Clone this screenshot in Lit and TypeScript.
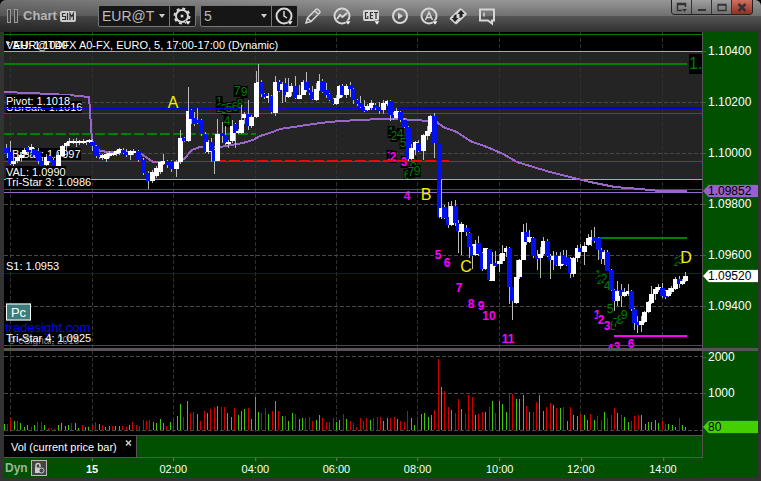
import { LitElement, html, css, svg } from "lit";
import { customElement, state } from "lit/decorators.js";

// Plot extents in chart units.
const LEFT = 4;
const WIDTH = 698;
const PRICE = { top: 32, height: 316 };
const VOLUME = { top: 351, height: 84 };

// centre, body top, body bottom, high, low, 1 = rising
const CANDLES = `6,148,153,144,153,0 10,152,164,141,165,0 13,161,164,155,166,1 17,157,161,152,163,1
21,155,158,152,162,1 24,150,154,148,158,1 28,147,152,146,157,0 31,147,150,144,153,1 34,149,155,148,157,0
38,151,161,148,164,0 42,161,166,158,167,0 46,157,165,154,166,1 49,156,161,155,163,0 53,160,166,158,167,0
58,155,167,152,168,1 62,146,156,145,157,1 66,143,146,142,152,1 69,141,143,138,146,1 73,141,143,139,144,1
76,142,143,138,147,1 79,141,143,140,145,1 83,141,143,139,144,1 86,141,142,140,145,1 89,140,142,139,143,1
92,142,146,139,151,0 96,146,156,145,158,0 99,154,157,153,159,0 102,155,158,154,160,1 106,154,159,153,162,1
109,153,156,151,158,1 113,153,155,152,156,1 116,151,154,150,156,1 119,149,153,148,155,1 123,150,153,148,154,0
126,152,155,149,157,0 130,151,155,150,160,1 133,151,153,149,155,1 138,151,160,150,162,0 143,160,173,158,175,0
148,173,181,171,189,0 152,172,181,170,183,1 156,168,176,166,178,1 160,162,172,161,174,1 163,161,164,154,165,1
167,161,165,160,168,0 171,161,169,160,172,0 176,162,169,160,177,1 180,138,162,130,164,1 184,138,141,137,142,0
188,111,141,87,142,1 191,110,119,109,124,0 194,118,124,112,126,0 197,120,123,108,124,0 201,120,134,119,136,0
205,134,152,132,153,0 208,142,152,140,154,1 211,142,151,138,162,0 214,150,161,149,174,0 217,134,161,119,161,1
222,133,136,122,143,0 225,135,143,126,145,0 228,142,144,140,148,1 232,126,141,120,143,1 235,124,133,123,148,0
238,131,133,129,134,1 241,120,133,105,134,1 244,114,118,112,124,1 248,114,126,100,130,0 251,117,126,115,128,1
256,83,117,71,118,1 258,82,84,64,84,1 261,82,94,80,97,0 264,94,97,93,99,0 268,96,98,93,103,1 271,96,112,95,114,0
275,82,113,76,116,1 279,82,91,80,92,0 282,84,90,82,103,1 285,83,95,78,102,0 288,92,97,78,98,1
291,86,92,83,96,1 295,86,98,76,99,0 299,95,99,85,99,1 303,82,95,80,95,1 306,82,90,72,92,0
309,90,93,88,95,0 312,92,99,86,100,0 316,89,100,83,101,1 319,81,90,74,91,1 322,81,92,79,93,0
326,90,95,83,98,0 329,94,100,93,101,0 333,99,104,98,105,0 336,98,104,95,105,1 339,86,98,85,99,1
342,86,95,84,97,0 346,86,95,84,98,1 350,85,89,82,97,0 353,89,100,88,104,0 357,100,104,99,106,0
360,103,107,96,108,0 364,107,111,100,112,0 367,106,110,104,111,1 371,103,108,100,110,1 375,105,108,103,110,0
379,107,111,102,114,0 383,103,110,100,114,1 387,101,104,100,106,1 390,101,115,100,121,0 393,115,118,112,120,0
396,111,118,108,119,1 400,112,120,111,122,0 404,120,127,118,128,0 408,127,159,126,161,0 411,148,159,144,160,1
415,142,150,141,155,1 418,143,151,140,152,0 423,135,151,134,160,1 427,131,136,126,140,1 430,116,132,115,134,1
434,116,143,113,158,0 439,143,217,143,218,0 441,208,217,179,219,1 444,207,218,205,219,0 448,217,225,202,228,0
451,206,225,201,226,1 455,206,223,200,226,0 458,223,231,220,253,0 461,224,232,222,255,1 466,228,232,225,236,0
469,233,247,232,258,0 472,246,256,244,269,0 475,244,255,240,256,1 478,243,254,236,256,0 482,253,269,252,271,0
485,248,269,248,270,1 489,249,280,249,281,0 492,264,281,252,281,1 495,263,266,251,267,0 499,261,264,254,272,1
502,253,261,245,264,1 506,248,252,246,257,1 509,248,287,247,304,0 512,287,301,287,320,0 516,277,303,260,304,1
519,260,277,259,279,1 523,232,260,224,260,1 526,232,242,223,245,0 529,237,242,230,243,1 533,238,256,237,258,0
537,256,259,250,270,0 540,254,258,247,278,1 543,241,254,237,256,1 547,241,256,239,257,0 550,256,260,254,279,0
553,256,260,251,270,1 556,255,265,252,266,0 560,256,266,252,269,1 563,255,264,250,265,0 566,257,265,250,266,0
570,259,273,257,278,0 573,258,274,257,277,1 577,248,258,245,262,1 580,248,252,244,256,0 584,246,252,242,265,1
588,238,245,234,246,1 591,237,240,230,246,1 594,237,241,227,243,0 598,238,250,237,260,0 601,250,259,248,264,0
604,252,259,250,265,1 607,252,271,250,271,0 611,270,290,269,291,0 614,290,301,289,311,0 617,291,301,281,306,1
621,290,296,284,307,0 624,292,296,288,297,1 628,291,294,284,296,1 631,291,309,290,311,0 634,309,323,308,330,0
637,322,325,316,333,0 641,321,325,316,332,1 644,312,322,311,323,1 648,302,312,301,313,1 651,294,303,286,304,1
655,289,294,287,300,1 658,287,290,284,292,1 662,288,296,283,298,0 665,291,297,290,299,0 668,290,296,288,297,1
671,288,292,286,294,1 675,279,289,277,290,1 679,279,284,276,288,0 682,281,284,279,285,1 685,276,281,272,282,1`
  .split(/\s+/)
  .map((row) => row.split(",").map(Number));

// x, height, colour letter
const VOLUMES = `4 6 g,7 6 r,10 12 r,14 9 g,17 9 r,20 7 g,24 3 g,27 5 g,31 3 r,34 5 g,37 8 r,41 8 r,44 5 g,48 2 r,51 2 r,54 1 r,58 5 g,61 7 g,65 4 g,68 5 g,71 7 r,75 7 g,78 2 g,82 5 r,85 3 g,88 3 g,92 5 r,95 8 r,99 6 g,102 5 r,105 3 g,109 4 g,112 4 r,115 4 g,119 4 g,122 4 r,126 3 r,129 5 g,132 8 r,136 5 r,139 4 r,143 10 r,146 9 r,149 10 r,153 8 g,156 7 g,160 11 g,163 7 g,166 4 r,170 8 g,173 11 r,177 14 g,180 26 g,183 13 r,187 29 g,190 17 r,193 18 r,197 16 g,200 9 r,204 19 r,207 17 g,210 21 r,214 23 r,217 24 g,221 23 r,224 23 r,227 17 g,231 13 g,234 22 r,238 15 g,241 19 g,244 21 g,248 22 r,251 11 g,255 33 g,258 18 g,261 17 r,265 22 r,268 16 g,272 19 r,275 29 g,278 19 r,282 14 g,285 14 r,288 9 g,292 17 g,295 16 r,299 11 g,302 12 g,305 12 r,309 13 r,312 9 r,316 10 g,319 15 g,322 12 r,326 8 r,329 8 r,333 12 r,336 8 g,339 10 g,343 16 r,346 11 g,350 9 r,353 7 r,356 3 r,360 12 r,363 9 r,366 12 r,370 10 g,373 12 r,377 13 r,380 13 r,383 9 g,387 12 g,390 12 r,394 13 r,397 11 g,400 9 r,404 8 r,407 19 r,411 12 g,414 5 g,417 13 r,421 16 g,424 17 g,428 13 g,431 15 g,434 20 r,438 71 r,441 43 g,444 39 r,448 23 r,451 20 g,455 17 r,458 31 r,461 21 g,465 16 r,468 35 r,472 33 r,475 15 g,478 16 r,482 18 r,485 18 g,489 23 r,492 29 g,495 17 r,499 29 g,502 26 g,506 18 g,509 36 r,512 36 r,516 31 g,519 31 g,523 35 g,526 24 r,529 18 g,533 18 r,536 28 r,539 35 g,543 19 g,546 23 r,550 27 r,553 25 g,556 22 r,560 22 g,563 23 r,567 9 g,570 23 r,573 15 g,577 14 g,580 16 r,584 15 g,587 10 g,590 16 r,594 10 g,597 14 r,601 10 r,604 18 g,607 12 r,611 15 r,614 22 r,617 17 g,621 15 r,624 13 g,628 8 g,631 9 r,634 14 r,638 15 r,641 15 g,645 6 g,648 8 g,651 8 g,655 10 g,658 7 g,662 9 r,665 6 r,668 6 g,672 5 g,675 3 g,679 12 r,682 5 g,685 3 g`
  .split(",")
  .map((row) => row.split(" "));

const AVERAGE =
  "4,92 30,93 69,95 89,97 92,140 97,150 107,152 137,152 143,155 153,162 180,162 185,158 192,150 200,147 220,147 243,143 253,140 260,136 270,133 280,129 300,126 320,123 340,121 360,120 380,119 400,119 413,120 430,121 437,122 443,127 457,132 470,141 487,147 503,154 517,162 530,166 550,172 570,177 590,182 615,187 640,189 660,191 687,191";

const TIMES: [number, string][] = [
  [92, "15"],
  [173, "02:00"],
  [255, "04:00"],
  [336, "06:00"],
  [417, "08:00"],
  [499, "10:00"],
  [580, "12:00"],
  [662, "14:00"],
];
const GRID_X = [10, ...TIMES.map(([x]) => x)];

const PRICES: [number, string][] = [
  [51, "1.10400"],
  [102, "1.10200"],
  [153, "1.10000"],
  [204, "1.09800"],
  [255, "1.09600"],
  [306, "1.09400"],
];

// x1, x2, y, thickness, class
const LEVELS: [number, number, number, number, string][] = [
  [4, 702, 34, 1, "green"],
  [4, 702, 51, 1, "cyan"],
  [4, 687, 63, 2, "green"],
  [4, 702, 108, 1, "blue"],
  [396, 702, 107, 2, "blue"],
  [4, 702, 113, 1, "red"],
  [4, 702, 161, 1, "red"],
  [4, 702, 179, 1, "cyan"],
  [4, 702, 189, 1, "green"],
  [4, 702, 192, 1, "purple"],
  [4, 702, 273, 1, "blue"],
  [4, 702, 345, 1, "green"],
  [598, 687, 237, 2, "green"],
  [614, 687, 335, 2, "pink"],
];

// text, centre x, centre y, class
type Mark = [string, number, number, string];
const COUNTS: Mark[] = [
  ["1", 219, 102, "count"], ["2", 220, 108, "count"], ["3", 224, 109, "count"], ["5", 229, 108, "count"],
  ["6", 235, 107, "count"], ["8", 240, 104, "count"], ["4", 227, 121, "count"], ["7", 237, 91, "count"],
  ["9", 244, 92, "count"], ["1", 391, 132, "count"], ["2", 394, 136, "count"], ["4", 400, 134, "count"],
  ["5", 403, 143, "count"], ["8", 413, 163, "count"], ["6", 407, 175, "count"], ["7", 411, 172, "count"],
  ["9", 417, 171, "count"], ["1", 598, 275, "count"], ["2", 600, 280, "count"], ["2", 604, 279, "count"],
  ["4", 607, 286, "count"], ["5", 610, 309, "count"], ["6", 613, 326, "count"], ["7", 616, 323, "count"],
  ["8", 620, 320, "count"], ["9", 624, 315, "count"], ["2", 677, 262, "count"], ["3", 681, 260, "count"],
  ["1", 390, 156, "down"], ["2", 393, 157, "down"], ["3", 404, 162, "down"], ["4", 407, 196, "down"],
  ["5", 438, 255, "down"], ["6", 447, 263, "down"], ["7", 459, 288, "down"], ["8", 471, 304, "down"],
  ["9", 481, 306, "down"], ["10", 489, 316, "down"], ["11", 508, 339, "down"], ["1", 597, 315, "down"],
  ["2", 601, 320, "down"], ["3", 607, 326, "down"], ["4", 610, 349, "down"], ["3", 617, 347, "down"],
  ["6", 631, 344, "down"],
];
const LETTERS: Mark[] = [
  ["A", 173, 103, "letter"],
  ["B", 426, 195, "letter"],
  ["C", 466, 267, "letter"],
  ["D", 686, 258, "letter"],
];

// text, left, centre y, class
const BACK_NOTES: Mark[] = [
  ["VAH: 1.1040", 6, 45, "note box"],
  ["UBreak: 1.1016", 6, 107, "note box"],
  ["LBreak: 1.0997", 6, 154, "note box"],
  ["tradesight.com", 5, 328, "note site"],
];
const FRONT_NOTES: Mark[] = [
  ["* EUR@TDFX A0-FX, EURO, 5, 17:00-17:00 (Dynamic)", 6, 45, "note"],
  ["Pivot: 1.1018", 6, 101, "note box"],
  ["Tri-Star 3: 1.0986", 6, 182, "note box"],
  ["VAL: 1.0990", 6, 172, "note box"],
  ["S1: 1.0953", 6, 266, "note box"],
  ["© eSignal, 2016", 8, 341, "note small"],
  ["Tri-Star 4: 1.0925", 6, 338, "note"],
];

const px = (x: number) => `${((x - LEFT) / WIDTH) * 100}%`;
const py = (y: number, pane = PRICE) => `${((y - pane.top) / pane.height) * 100}%`;

@customElement("app-root")
export class AppRoot extends LitElement {
  @state() private tabOpen = true;

  static styles = css`
    :host {
      display: block;
      height: 100vh;
      font-family: "Liberation Sans", Arial, sans-serif;
      font-size: 12px;
      line-height: 14px;
      color: #fff;
      background: #000;
    }
    * { box-sizing: border-box; }
    button, select { font: inherit; color: inherit; margin: 0; padding: 0; border: 0; background: none; }
    .window {
      display: grid;
      grid-template-rows: 32px minmax(0, 1fr);
      height: 100%;
      border-radius: 6px 6px 0 0;
      background: #333;
      overflow: hidden;
    }
    header {
      display: flex;
      align-items: flex-start;
      justify-content: space-between;
      padding-left: 7px;
      padding-right: 8px;
      background:
        linear-gradient(90deg, rgba(0, 0, 0, 0.25), transparent 50%),
        linear-gradient(#969696, #707070 50%, #555 51%, #303030);
    }
    .tools { display: flex; align-items: center; height: 32px; }
    .grip { display: flex; gap: 3px; margin-right: 5px; }
    .grip i { width: 4px; height: 14px; border: 1px solid #999; background: #444; }
    h1 { margin: 0 3px 0 0; font-size: 13px; line-height: 16px; font-weight: bold; color: #b4b4b4; }
    .sim { margin-right: 22px; }
    .field {
      display: flex;
      align-items: center;
      height: 22px;
      margin-right: 4px;
      border: 1px solid #777;
      border-radius: 2px;
      background: #161616;
    }
    .pick { position: relative; display: flex; align-items: center; }
    .pick select {
      appearance: none;
      width: 71px;
      height: 20px;
      padding: 0 14px 0 3px;
      border-right: 1px solid #777;
      font-size: 14px;
      color: #bbb;
      text-overflow: clip;
    }
    .pick svg { position: absolute; right: 5px; pointer-events: none; }
    .field button { display: flex; align-items: center; justify-content: center; width: 25px; height: 20px; }
    .icons { display: flex; gap: 7px; }
    .icons button { display: flex; align-items: center; justify-content: center; width: 22px; height: 22px; }
    .controls { display: flex; border: 1px solid #222; border-top: 0; border-radius: 0 0 4px 4px; overflow: hidden; height: 15px; }
    .controls button {
      display: flex; align-items: center; justify-content: center;
      width: 20px; height: 14px;
      border-right: 1px solid #333;
      background: linear-gradient(#a0a0a0, #707070);
    }
    .controls .close { border-right: 0; background: linear-gradient(#d07060, #903020); }
    main {
      display: grid;
      grid-template-columns: minmax(0, 1fr) 56px;
      grid-template-rows: minmax(0, 1fr) 3px 84px 42px;
      margin: 0 3px 4px 4px;
      background: #005000;
    }
    .pane { position: relative; overflow: hidden; background: #000; }
    .pane svg { position: absolute; inset: 0; width: 100%; height: 100%; }
    .split { grid-column: 1 / -1; background: #555; }
    .axis { position: relative; border-left: 1px solid #555; }
    .axis span { position: absolute; left: 5px; transform: translateY(-50%); white-space: nowrap; }
    .axis span::before { content: ""; position: absolute; left: -5px; top: 7px; width: 3px; height: 1px; background: #555; }
    .axis .tag {
      left: 0; right: 0; height: 13px; padding-left: 5px;
      line-height: 13px; color: #000; background: #fff;
      clip-path: polygon(0 50%, 6px 0, 100% 0, 100% 100%, 6px 100%);
    }
    .axis .tag.avg { background: #9a5fcf; }
    .axis .tag.vol { background: #44d000; }
    .grid { stroke: #484848; stroke-dasharray: 4 2; fill: none; }
    .vgrid { stroke: #303030; stroke-dasharray: 4 2; fill: none; }
    .zone { fill: #242424; }
    .green { fill: #008000; }
    .cyan { fill: #00f0f0; }
    .red { fill: #f00; }
    .blue { fill: #0000e0; }
    .purple { fill: #9a66cc; }
    .pink { fill: #f0f; }
    .average { fill: none; stroke: #9a66cc; stroke-width: 2; }
    .dash-green { fill: none; stroke: #008000; stroke-width: 2; stroke-dasharray: 10 3; }
    .dash-red { fill: none; stroke: #f00; stroke-width: 2; stroke-dasharray: 11 3; }
    .wick { fill: #bbb; }
    .up { fill: #fff; }
    .fall { fill: #0010f0; }
    .g { fill: #40c800; }
    .r { fill: #d00000; }
    .mark { position: absolute; transform: translate(-50%, -50%); white-space: nowrap; }
    .count { font-size: 12px; line-height: 12px; color: #008000; background: #000; }
    .down { font-size: 12px; line-height: 12px; font-weight: bold; color: #f0f; background: #000; }
    .letter { font-size: 16px; line-height: 16px; color: #f0f000; }
    .note { position: absolute; transform: translateY(-50%); white-space: nowrap; font-size: 11px; line-height: 12px; }
    .box { background: #000; }
    .site { font-size: 13px; color: #00f; }
    .small { font-size: 10px; color: #888; }
    .high { position: absolute; right: 0; width: 13px; height: 20px; transform: translateY(-50%); overflow: hidden; font-size: 16px; line-height: 20px; color: #008000; background: #000; }
    .pc {
      position: absolute; width: 25px; height: 17px; transform: translateY(-50%);
      border: 1px solid #fff; font-size: 13px; line-height: 14px; background: #3c7c7c;
    }
    .foot { display: grid; grid-template-rows: 22px 20px; border-right: 1px solid #555; border-top: 1px solid #555; margin-right: -1px; }
    .tabs { display: flex; border-bottom: 1px solid #555; }
    .tab { display: flex; align-items: flex-start; gap: 8px; width: 133px; padding: 4px 4px 0 7px; border-right: 1px solid #555; background: #000; font-size: 11px; white-space: nowrap; }
    .tab button { display: flex; }
    .times { position: relative; display: flex; align-items: center; gap: 3px; padding-left: 1px; margin-right: -1px; background: #005000; }
    .dyn { font-weight: bold; color: #9fb39f; }
    .lock { display: flex; align-items: center; justify-content: center; width: 16px; height: 16px; border: 1px solid #bbb; background: #444; }
    .times span { position: absolute; top: 4px; transform: translateX(-50%); font-size: 11px; }
    .times .day { font-weight: bold; }
    .times span::before { content: ""; position: absolute; left: 50%; top: -4px; width: 1px; height: 3px; background: #777; }
  `;

  private mark([text, x, y, kind]: Mark) {
    return html`<span class="mark ${kind}" style="left:${px(x)};top:${py(y)}">${text}</span>`;
  }

  private note([text, x, y, kind]: Mark) {
    return html`<span class=${kind} style="left:${px(x)};top:${py(y)}">${text}</span>`;
  }

  private caret() {
    return html`<svg width="6" height="4" viewBox="0 0 6 4"><path d="M0 0h6L3 4z" fill="#ccc" /></svg>`;
  }

  private header() {
    const light = "#d6d6d6";
    const drop = svg`<path d="M13 15h6l-3 4z" fill="#fff" stroke="#222" stroke-width=".5"/>`;
    const icon = (label: string, body: unknown) =>
      html`<button aria-label=${label}><svg width="20" height="20" viewBox="0 0 20 20" fill="none" stroke=${light} stroke-width="2">${body}</svg></button>`;
    return html`
      <header>
        <div class="tools">
          <div class="grip"><i></i><i></i></div>
          <h1>Chart</h1>
          <svg class="sim" width="16" height="11" viewBox="0 0 16 11" role="img" aria-label="Simulated">
            <rect width="16" height="11" rx="2" fill="#ccc" />
            <path d="M5.500 2.500H2.500v3h3v3h-3.500M7.500 2v7M10 9V2.500l1.700 3 1.700-3V9" fill="none" stroke="#333" stroke-width="1.200" />
          </svg>
          <div class="field">
            <div class="pick">
              <select aria-label="Symbol"><option>EUR@TDFX</option></select>${this.caret()}
            </div>
            ${icon("Symbol settings", svg`
              <circle cx="10" cy="10" r="6"/>
              <circle cx="10" cy="10" r="7.500" stroke-dasharray="3 2.900" stroke-width="2"/>
              <circle cx="10" cy="10" r="1.500" fill=${light} stroke="none"/>${drop}`)}
          </div>
          <div class="field">
            <div class="pick">
              <select aria-label="Interval"><option>5</option></select>${this.caret()}
            </div>
            ${icon("Time template", svg`<circle cx="10" cy="10" r="7.500"/><path d="M10 5v5l3 2" stroke-width="1.500"/>${drop}`)}
          </div>
          <div class="icons">
            ${icon("Draw", svg`<path d="M3 17l1.500-5L13 3.500q1-1 2 0l1.500 1.500q1 1 0 2L8 15.500zM12 5l3.500 3.500M4.500 12l3.500 3.500" stroke-width="1.500"/>`)}
            ${icon("Studies", svg`<circle cx="10" cy="10" r="7.500"/><path d="M5 13l3-4 2.500 2L15 7"/>${drop}`)}
            ${icon("Get", svg`<rect x="2" y="4" width="16" height="11" rx="2" fill=${light} stroke="none"/>
              <path d="M7 6.500H4.500v6h2.300V10M12 6.500H9.500v6H12M9.500 9.500H12M13 6.500h4M15 6.500V13" stroke="#333" stroke-width="1.200"/>${drop}`)}
            ${icon("Replay", svg`<circle cx="10" cy="10" r="7"/><path d="M8 6.500l5 3.500-5 3.500z" fill=${light} stroke="none"/>`)}
            ${icon("Alerts", svg`<circle cx="10" cy="10" r="7.500"/><path d="M6.500 14L10 6l3.500 8M8 11.500h4" stroke-width="1.500"/>${drop}`)}
            ${icon("Trade", svg`<path d="M3 12.500L12.500 3.500l5 4.500L8 17z" fill=${light} stroke-width="2.500" stroke-linejoin="round"/>
              <path d="M8.500 8v4h2L7 16l-3.500-4h2V10zM11.500 12V8h-2L13 4l3.500 4h-2v3z" fill="#222" stroke="none"/>`)}
            ${icon("Comment", svg`<path d="M3 3.500h14v11h-2v3l-4-3H3z"/><path d="M7 6.500v4" stroke-width="1.500"/>`)}
          </div>
        </div>
        <div class="controls">
          <button aria-label="Pop out"><svg width="12" height="11" viewBox="0 0 12 11"><path d="M6 8.500H1.500v-7h8V5M1 2.500h9" fill="none" stroke="#333" stroke-width="1.500" /><path d="M6 7h5L8.500 10z" fill="#333" /></svg></button>
          <button aria-label="Minimize"><svg width="10" height="9" viewBox="0 0 10 9"><path d="M1 7h8" stroke="#333" stroke-width="2" /></svg></button>
          <button aria-label="Maximize"><svg width="10" height="9" viewBox="0 0 10 9"><path d="M1 1.500h8v6H1zM1 2h8" fill="none" stroke="#333" stroke-width="1.300" /></svg></button>
          <button class="close" aria-label="Close"><svg width="10" height="9" viewBox="0 0 10 9"><path d="M1.500 1l7 7M8.500 1l-7 7" stroke="#333" stroke-width="2.500" /></svg></button>
        </div>
      </header>
    `;
  }

  private pricePane() {
    const box = `${LEFT} ${PRICE.top} ${WIDTH} ${PRICE.height}`;
    return html`
      <section class="pane" aria-label="Price">
        <svg viewBox=${box} preserveAspectRatio="none" shape-rendering="crispEdges">
          <rect class="zone" x="4" y="52" width="698" height="127" />
          ${GRID_X.map((x) => svg`<path class="vgrid" d="M${x}.5 32V348"/>`)}
          ${PRICES.map(([y]) => svg`<path class="grid" d="M4 ${y}.5H702"/>`)}
        </svg>
        ${BACK_NOTES.map((n) => this.note(n))}
        ${COUNTS.map((m) => this.mark(m))}
        <svg viewBox=${box} preserveAspectRatio="none" shape-rendering="crispEdges">
          ${LEVELS.map(([a, b, y, h, kind]) => svg`<rect class=${kind} x=${a} y=${y} width=${b - a} height=${h}/>`)}
          <path class="dash-green" d="M4 134H256" />
          <path class="dash-red" d="M215 161H449" />
          <polyline class="average" points=${AVERAGE} />
          ${CANDLES.map(([x, top, bottom, high, low, up]) => svg`
            <rect class="wick" x=${x} y=${high} width="1" height=${low - high}/>
            <rect class=${up ? "up" : "fall"} x=${x - 2} y=${top} width="5" height=${bottom - top}/>`)}
        </svg>
        ${LETTERS.map((m) => this.mark(m))}
        ${FRONT_NOTES.map((n) => this.note(n))}
        <span class="high" style="top:${py(64)}">1.1</span>
        <button class="pc" style="left:${px(6)};top:${py(312)}">Pc</button>
      </section>
      <div class="axis">
        ${PRICES.map(([y, text]) => html`<span style="top:${py(y)}">${text}</span>`)}
        <span class="tag avg" style="top:${py(191)}">1.09852</span>
        <span class="tag" style="top:${py(276)}">1.09520</span>
      </div>
    `;
  }

  private volumePane() {
    return html`
      <section class="pane" aria-label="Volume">
        <svg viewBox="${LEFT} ${VOLUME.top} ${WIDTH} ${VOLUME.height}" preserveAspectRatio="none" shape-rendering="crispEdges">
          ${GRID_X.map((x) => svg`<path class="vgrid" d="M${x}.5 351V432"/>`)}
          ${[356, 393, 430].map((y) => svg`<path class="grid" d="M4 ${y}.5H702"/>`)}
          ${VOLUMES.map(([x, h, kind]) => svg`<rect class=${kind} x=${x} y=${430 - Number(h)} width="1" height=${h}/>`)}
        </svg>
      </section>
      <div class="axis">
        <span style="top:${py(357, VOLUME)}">2000</span>
        <span style="top:${py(393, VOLUME)}">1000</span>
        <span class="tag vol" style="top:${py(427, VOLUME)}">80</span>
      </div>
    `;
  }

  render() {
    return html`
      <div class="window">
        ${this.header()}
        <main>
          ${this.pricePane()}
          <div class="split"></div>
          ${this.volumePane()}
          <div class="foot">
            <div class="tabs">
              ${this.tabOpen
                ? html`<div class="tab">
                    <span>Vol (current price bar)</span>
                    <button aria-label="Close tab" @click=${() => (this.tabOpen = false)}>
                      <svg width="7" height="6" viewBox="0 0 7 6"><path d="M1 .5l5 5M6 .5l-5 5" stroke="#ccc" stroke-width="1.500" /></svg>
                    </button>
                  </div>`
                : null}
            </div>
            <div class="times">
              <button class="dyn">Dyn</button>
              <button class="lock" aria-label="Lock scale">
                <svg width="12" height="12" viewBox="0 0 12 12"><path d="M3 6V3.500a2 2 0 0 1 4 0V5" fill="none" stroke="#ccc" stroke-width="1.500" /><path d="M2 5.500h5V11H2z" fill="#ccc" /><circle cx="8.500" cy="8.500" r="2.500" fill="#444" stroke="#ccc" /></svg>
              </button>
              ${TIMES.map(([x, text]) => html`<span class=${text.includes(":") ? "" : "day"} style="left:${px(x)}">${text}</span>`)}
            </div>
          </div>
        </main>
      </div>
    `;
  }
}
